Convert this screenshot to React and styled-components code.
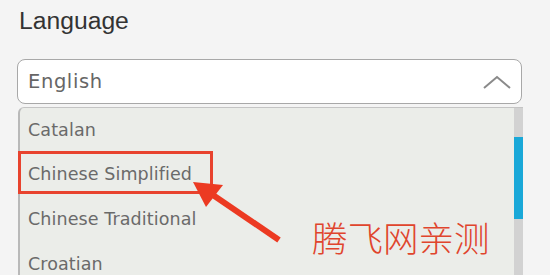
import React from "react";
import styled, { createGlobalStyle } from "styled-components";

const Global = createGlobalStyle`
  html, body { margin: 0; padding: 0; background: #f4f4f4; }
  body { width: 550px; height: 275px; overflow: hidden; }
`;

const Page = styled.div`
  position: relative;
  width: 550px;
  height: 275px;
  overflow: hidden;
  background: #f4f4f4;
  box-sizing: border-box;
  padding: 7px 0 0 0;
`;

const Label = styled.div`
  margin-left: 19px;
  font-family: "Liberation Sans", Arial, sans-serif;
  font-size: 24.7px;
  line-height: 28px;
  color: #333;
`;

const Select = styled.div`
  margin: 24px 0 0 17px;
  width: 505px;
  height: 45px;
  box-sizing: border-box;
  border: 1.5px solid #a8a8a8;
  border-radius: 8px;
  background: #fff;
  display: flex;
  align-items: center;
  justify-content: space-between;
  padding: 0 9px 0 10px;
`;

const Value = styled.span`
  font-family: "DejaVu Sans", sans-serif;
  font-size: 19.5px;
  color: #666;
  letter-spacing: 0.6px;
`;

const List = styled.div`
  margin: 3px 0 0 18px;
  width: 505px;
  height: 170px;
  box-sizing: border-box;
  border-left: 2px solid #b9b9b9;
  border-top: 1px solid #c4c4c4;
  border-top-left-radius: 6px;
  background: #ebede9;
  display: flex;
`;

const Items = styled.div`
  flex: 1;
  display: flex;
  flex-direction: column;
`;

const Item = styled.div`
  position: relative;
  height: ${(p) => (p.$first ? "43px" : "45px")};
  flex: none;
  display: flex;
  align-items: center;
  padding-left: 8px;
  font-family: "DejaVu Sans", sans-serif;
  font-size: 17.5px;
  color: #6a6a6a;
  letter-spacing: 0.1px;
`;

const Marker = styled.div`
  position: absolute;
  left: -2px;
  top: 0px;
  width: 195px;
  height: 43px;
  box-sizing: border-box;
  border: 3px solid #e8432e;
`;

const Track = styled.div`
  width: 9px;
  flex: none;
  background: #d2d2d2;
  padding-top: 29px;
  box-sizing: border-box;
`;

const Thumb = styled.div`
  height: 82px;
  background: #19a8d8;
`;

const Arrow = styled.svg`
  position: absolute;
  left: 0;
  top: 0;
  pointer-events: none;
`;

const Note = styled.div`
  position: absolute;
  left: 312px;
  top: 213px;
  font-family: "Noto Sans CJK SC", sans-serif;
  font-weight: 300;
  font-size: 35.5px;
  line-height: 48px;
  color: #e0452d;
`;

export default function App() {
  return (
    <>
      <Global />
      <Page>
        <Label>Language</Label>
        <Select>
          <Value>English</Value>
          <svg width="30" height="16" viewBox="0 0 30 16">
            <path d="M2 14 L15 3 L28 14" fill="none" stroke="#8a8a8a" strokeWidth="2" />
          </svg>
        </Select>
        <List>
          <Items>
            <Item $first>Catalan</Item>
            <Item>
              Chinese Simplified
              <Marker />
            </Item>
            <Item>Chinese Traditional</Item>
            <Item>Croatian</Item>
          </Items>
          <Track>
            <Thumb />
          </Track>
        </List>
        <Arrow width="550" height="275" viewBox="0 0 550 275">
          <line x1="279" y1="240" x2="210" y2="193" stroke="#ec3a22" strokeWidth="6" strokeLinecap="butt" />
          <polygon points="193,182 223,185 206,207" fill="#ec3a22" />
        </Arrow>
        <Note>腾飞网亲测</Note>
      </Page>
    </>
  );
}
